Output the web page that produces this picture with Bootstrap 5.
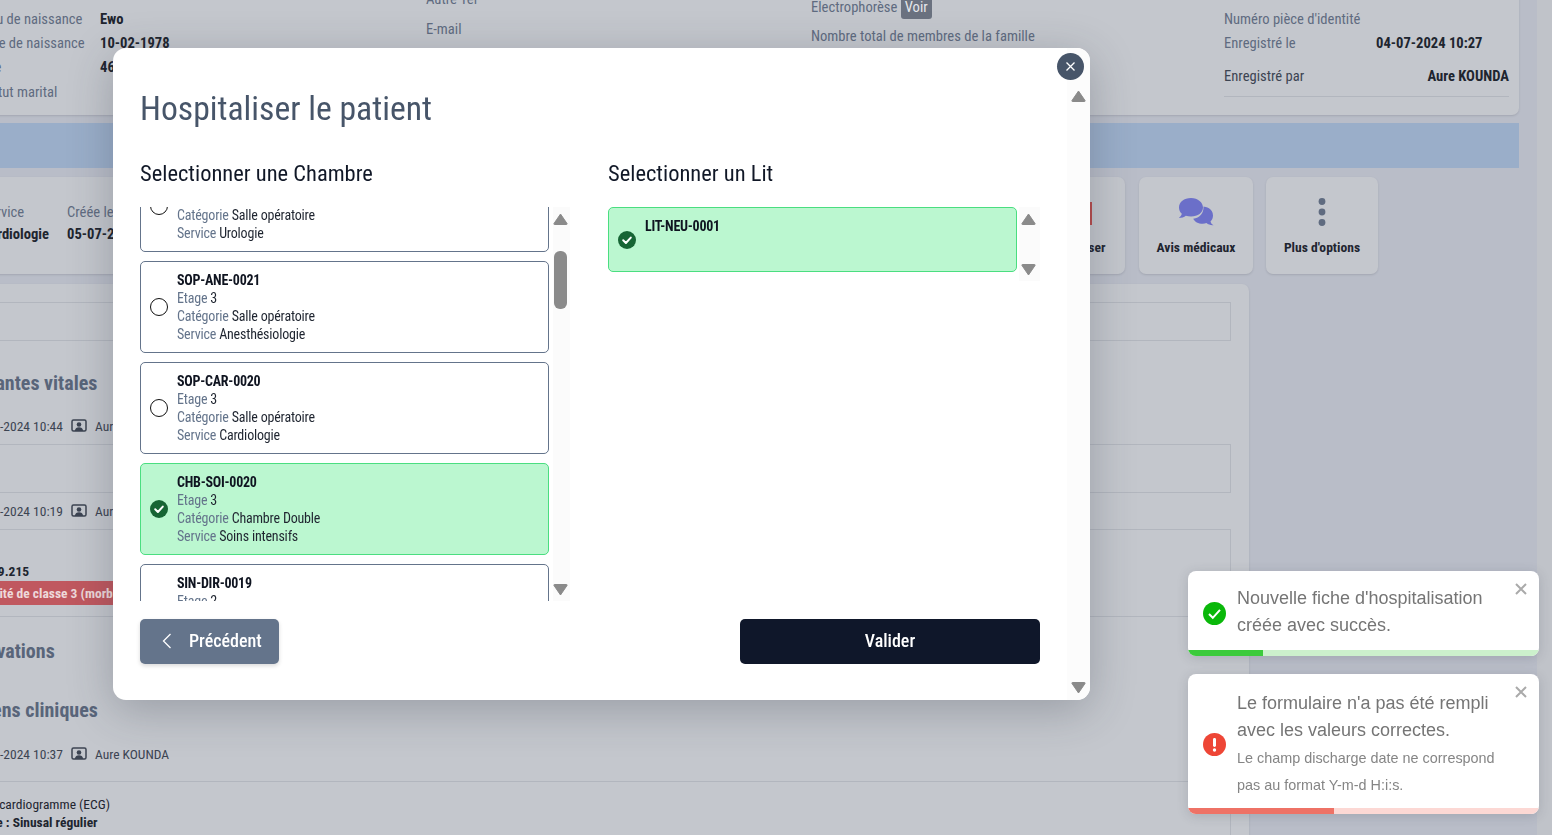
<!DOCTYPE html>
<html lang="fr"><head><meta charset="utf-8"><title>Hospitaliser</title>
<link href="https://cdn.jsdelivr.net/npm/bootstrap@5.3.0/dist/css/bootstrap.min.css" rel="stylesheet">
<style>
html,body{height:100%;overflow:hidden}
body{background:#b9bdc8;font-family:"Roboto Condensed","Liberation Sans Narrow",Roboto,sans-serif;font-stretch:condensed;font-size:14.6px;color:#1f2530}
.shell{height:835px;overflow:hidden}
.pg{width:1579px;margin-left:-60px;margin-top:-18px;flex:none}
.strip{width:15px;flex:none;margin-left:18px;background:#c0c3c9}
.panel{background:#c4c7cd;border-radius:7px;box-shadow:0 1px 2px rgba(60,65,80,.18)}
.lbl{color:#5f6b80}.val{font-weight:700;color:#20252f}
.top-card{height:133px}
.c1{width:486px;padding:24.5px 0 0 39px}.c2{width:385px;padding-top:5px}.c3{width:413px;padding-top:13px}.c4{width:285px;padding-top:25px}
.tr{height:24.4px;line-height:24.4px;white-space:nowrap}
.c1 .lbl{display:inline-block;width:121px}
.c4 .lbl{display:inline-block;width:152px}
.voir{background:#6b7280;color:#e5e7eb;border-radius:3px;padding:1px 4px 3px;margin-left:0}
.c2 .gap1{margin-top:6px}.c3 .gap2{margin-top:5px}
.c4 .hr2{border-top:1px solid #b2b6be;margin-top:8px;width:285px}
.bluebar{height:45px;margin-top:8px;background:#9aaec9}
.svc{height:97px;margin-top:9px;gap:14px}
.svc-main{flex:0 0 1066px;padding:24px 0 0 42px;gap:18px;line-height:22px;height:97px}
.act{height:97px;text-align:center;font-weight:700;font-size:13.6px;padding-top:20px}
.act svg{display:block;margin:0 auto 10px}
.a1{width:105px;padding-top:24px}.a2{width:114px}.a3{width:112px;margin-left:-1px}
.a1 svg{margin-bottom:11px}
.main{height:600px;width:1309px;margin-top:10px;padding:18px 18px 0 0}
.bx{border:1px solid #b2b6be;border-left:0}
.b1{height:39px}
.sect{color:#59657a;font-weight:700;font-size:20px;line-height:26px;white-space:nowrap}
.dt{font-size:13.5px;color:#3c4452;gap:8px;line-height:18px;white-space:nowrap;padding-left:30px}
.redbar{background:#c0585f;color:#eed9da;font-weight:700;font-size:13.5px;width:300px;height:24px;line-height:24px;padding-left:32px;white-space:nowrap;overflow:hidden}
.sx{padding-left:9px}
.ecg{font-size:13.5px;padding-left:22px;padding-top:13px;line-height:18px;height:100px;border-bottom:0;margin-top:18px}
.hsp{position:fixed;left:113px;top:48px;width:977px;height:652px;background:#fff;border-radius:13px;box-shadow:0 10px 45px rgba(40,45,60,.28);overflow:hidden;font-size:14px;letter-spacing:-.19px}
.hsp-body{padding:0 27px;width:954px}
.hsp-title{font-size:33.7px;line-height:40px;color:#475569;margin:41px 0 0;font-weight:400;letter-spacing:0}
.sub{font-size:22.5px;line-height:30px;color:#111827;margin:0 0 19px;font-weight:400;letter-spacing:0}
.hsp-scroll{position:absolute;right:0;top:0;bottom:0;width:23px;background:#fcfcfc}
.arr{display:block;width:15px;height:12px;fill:#8a8a8a}
.hsp-scroll .up{position:absolute;top:42px;left:4px}
.hsp-scroll .dn{position:absolute;bottom:6px;left:4px}
.close-x{position:absolute;left:944px;top:5px;width:27px;height:27px;border-radius:50%;background:#475569;z-index:2;border:0;padding:0}
.lcol{width:430px;flex:none}.rcol{width:432px;margin-left:38px;flex:none}
.view{height:394px;overflow:hidden;width:409px}
.rolls{margin-top:-47px;gap:9px}
.rm{height:92px;flex:none;border:1px solid #64748b;border-radius:5px;padding:9px 9px;gap:9px;line-height:18px;background:#fff;color:#1f2530;white-space:nowrap}
.rm.on{background:#bbf7d0;border-color:#4ade80}
.rm .k{color:#64748b}.rm .nm{font-weight:700;color:#0f1420;letter-spacing:-.25px}
.radio-o{width:18px;height:18px;border:1.5px solid #111;border-radius:50%;flex:none}
.chk{width:18px;height:18px;flex:none;display:block}
.sbar{width:17px;margin-left:4px;height:394px;background:#fbfbfb;position:relative}
.sbar .up{position:absolute;top:6px;left:0}
.sbar .dn{position:absolute;bottom:5px;left:0}
.thumb{position:absolute;left:1px;top:44px;width:13px;height:58px;border-radius:6px;background:#8a8a8a}
.bar2{width:21px;height:74px;margin-left:2px;background:#fbfbfb;position:relative}
.bar2 .up{position:absolute;top:6px;left:2px}.bar2 .dn{position:absolute;bottom:5px;left:2px}
.bed{height:65px;width:409px}
.btn-prev,.btn-ok{height:45px;font-size:18px;font-weight:500;border-radius:5px;color:#fff;border:0;padding-bottom:8px;padding-top:6px;letter-spacing:0}
.btn-prev{background:#64748b;width:139px;box-shadow:0 2px 4px rgba(0,0,0,.15);gap:17px;padding-left:22px;padding-right:0}
.btn-ok{background:#0f172a;width:300px}
.foot{margin-top:18px;width:900px}
.tst{position:fixed;left:1188px;width:351px;background:#fff;border-radius:8px;box-shadow:0 2px 12px rgba(50,55,70,.18);font-family:"Liberation Sans",Arial,sans-serif;font-stretch:normal;color:#757575;overflow:hidden;font-size:18px;line-height:27px}
.t1{top:571px;height:85px}.t2{top:674px;height:140px}
.tst-in{padding:0 0 0 15px;gap:11px;height:100%}
.t1 .msg{margin-top:-3px}
.t2 .msg{margin-top:1px}
.tst-x{position:absolute;right:12px;top:12px;width:12px;height:12px;display:block;stroke:#aaa;stroke-width:2}
.tst-small{font-size:14.4px;line-height:27px;display:block;color:#858585;margin-top:1px}
.prog{position:absolute;left:0;right:0;bottom:0;height:6px}
.prog i{display:block;height:100%}
.gp{background:#ccf1cc}.gp i{background:#3ccb3c;width:75px}
.rp{background:#fcd8d4}.rp i{background:#ee7266;width:146px}
</style></head>
<body>
<svg width="0" height="0" class="position-absolute">
 <symbol id="up" viewBox="0 0 15 12"><path d="M7.5 1 14 10.5a.6.6 0 0 1-.5 1H1.5a.6.6 0 0 1-.5-1z" stroke="#8a8a8a" stroke-linejoin="round"/></symbol>
 <symbol id="dn" viewBox="0 0 15 12"><path d="M7.5 11 14 1.5a.6.6 0 0 0-.5-1H1.5a.6.6 0 0 0-.5 1z" stroke="#8a8a8a" stroke-linejoin="round"/></symbol>
 <symbol id="ok" viewBox="0 0 18 18"><circle cx="9" cy="9" r="9" fill="#166534"/><path d="M5.2 9.3 7.9 12l4.9-5.4" fill="none" stroke="#fff" stroke-width="2" stroke-linecap="round" stroke-linejoin="round"/></symbol>
 <symbol id="who" viewBox="0 0 16 14"><rect x="1" y="1" width="14" height="11" rx="1.5" fill="none" stroke="#3c4452" stroke-width="1.5"/><circle cx="8" cy="5.5" r="2.3" fill="#3c4452"/><path d="M3.8 12c.4-2.8 2-3.8 4.2-3.8s3.800 1 4.200 3.800z" fill="#3c4452"/></symbol>
</svg>
<div class="shell d-flex">
<div class="pg">
 <div class="panel top-card d-flex">
  <div class="c1">
   <div class="tr"><span class="lbl">Lieu de naissance</span><span class="val">Ewo</span></div>
   <div class="tr"><span class="lbl">Date de naissance</span><span class="val">10-02-1978</span></div>
   <div class="tr"><span class="lbl">Age</span><span class="val">46</span></div>
   <div class="tr"><span class="lbl">Statut marital</span></div>
  </div>
  <div class="c2">
   <div class="tr lbl">Autre Tel</div>
   <div class="tr lbl gap1">E-mail</div>
  </div>
  <div class="c3">
   <div class="tr lbl">Electrophorèse <span class="voir">Voir</span></div>
   <div class="tr lbl gap2">Nombre total de membres de la famille</div>
  </div>
  <div class="c4">
   <div class="tr"><span class="lbl">Numéro pièce d'identité</span></div>
   <div class="tr"><span class="lbl">Enregistré le</span><span class="val">04-07-2024 10:27</span></div>
   <div class="tr d-flex justify-content-between mt-2"><span style="color:#3c4452">Enregistré par</span><span class="val">Aure KOUNDA</span></div>
   <div class="hr2"></div>
  </div>
 </div>
 <div class="bluebar"></div>
 <div class="svc d-flex">
  <div class="panel svc-main d-flex">
   <div><div class="lbl">Service</div><div class="val">Cardiologie</div></div>
   <div><div class="lbl">Créée le</div><div class="val">05-07-2024</div></div>
  </div>
  <div class="panel act a1">
   <svg width="38" height="25" viewBox="0 0 38 25"><path d="M36.500 1v23" stroke="#b84b4b" stroke-width="3" fill="none"/></svg>
   Hospitaliser</div>
  <div class="panel act a2">
   <svg width="36" height="30" viewBox="0 0 36 30"><path d="M13 1C6 1 1 5 1 10.500c0 2.500 1 4.700 2.800 6.300C3.500 18.500 2.300 20 .8 21c2.900 0 5.300-1 7-2.300 1.600.5 3.400.8 5.200.8 7 0 12-4 12-9S20 1 13 1z" fill="#6b6fc9"/><path d="M25.500 9.500c2 .3 9.500 1.700 9.500 9 0 2.500-1 4.500-2.500 6 .3 1.500 1.500 3 3 3.800-3 .2-5.300-.8-7-2.200-1.200.4-2.500.6-3.800.6-4.500 0-8-2-9.500-5 6.500-.5 10.800-6 10.300-12.200z" fill="#6b6fc9"/></svg>
   Avis médicaux</div>
  <div class="panel act a3">
   <svg width="8" height="30" viewBox="0 0 8 30"><circle cx="4" cy="4.500" r="3.400" fill="#5f6b80"/><circle cx="4" cy="15" r="3.400" fill="#5f6b80"/><circle cx="4" cy="25.500" r="3.400" fill="#5f6b80"/></svg>
   Plus d'options</div>
 </div>
 <div class="panel main">
  <div class="bx b1"></div>
  <div class="sx sect" style="margin-top:29px">Constantes vitales</div>
  <div class="dt d-flex align-items-center" style="margin-top:21px"><span>04-07-2024 10:44</span><svg width="16" height="14"><use href="#who"/></svg><span>Aure KOUNDA</span></div>
  <div class="bx" style="height:49px;margin-top:9px"></div>
  <div class="dt d-flex align-items-center" style="margin-top:9px"><span>04-07-2024 10:19</span><svg width="16" height="14"><use href="#who"/></svg><span>Aure KOUNDA</span></div>
  <div class="bx" style="height:88px;margin-top:9px">
   <div class="val" style="margin-top:32px;line-height:18px;font-size:13.5px;padding-left:51px">29.215</div>
   <div class="redbar" style="margin-top:1px">Obésité de classe 3 (morbide)</div>
  </div>
  <div class="sx sect" style="margin-top:21px">Observations</div>
  <div class="sx sect" style="margin-top:33px">Examens cliniques</div>
  <div class="dt d-flex align-items-center" style="margin-top:22px"><span>05-07-2024 10:37</span><svg width="16" height="14"><use href="#who"/></svg><span>Aure KOUNDA</span></div>
  <div class="bx ecg">
   <div class="text-nowrap">Electrocardiogramme (ECG)</div>
   <div class="val text-nowrap">Rythme : Sinusal régulier</div>
   <div class="text-nowrap">Conduction auriculo-ventriculaire normale</div>
  </div>
 </div>
</div>
<div class="strip"></div>
</div>

<div class="hsp">
 <button class="close-x" aria-label="Fermer"><svg width="11" height="11" viewBox="0 0 11 11" class="d-block mx-auto"><path d="M1.500 1.500l8 8m0-8l-8 8" stroke="#fff" stroke-width="1.300"/></svg></button>
 <div class="hsp-scroll"><svg class="arr up"><use href="#up"/></svg><svg class="arr dn"><use href="#dn"/></svg></div>
 <div class="hsp-body">
  <h2 class="hsp-title">Hospitaliser le patient</h2>
  <div class="d-flex" style="margin-top:29px">
   <div class="lcol">
    <h3 class="sub">Selectionner une Chambre</h3>
    <div class="d-flex">
     <div class="view"><div class="rolls d-flex flex-column">
      <div class="rm d-flex align-items-center"><span class="radio-o"></span><div><div class="nm">SOP-URO-0022</div><div><span class="k">Etage</span> 3</div><div><span class="k">Catégorie</span> Salle opératoire</div><div><span class="k">Service</span> Urologie</div></div></div>
      <div class="rm d-flex align-items-center"><span class="radio-o"></span><div><div class="nm">SOP-ANE-0021</div><div><span class="k">Etage</span> 3</div><div><span class="k">Catégorie</span> Salle opératoire</div><div><span class="k">Service</span> Anesthésiologie</div></div></div>
      <div class="rm d-flex align-items-center"><span class="radio-o"></span><div><div class="nm">SOP-CAR-0020</div><div><span class="k">Etage</span> 3</div><div><span class="k">Catégorie</span> Salle opératoire</div><div><span class="k">Service</span> Cardiologie</div></div></div>
      <div class="rm on d-flex align-items-center"><svg class="chk"><use href="#ok"/></svg><div><div class="nm">CHB-SOI-0020</div><div><span class="k">Etage</span> 3</div><div><span class="k">Catégorie</span> Chambre Double</div><div><span class="k">Service</span> Soins intensifs</div></div></div>
      <div class="rm d-flex align-items-center"><span class="radio-o invisible"></span><div><div class="nm">SIN-DIR-0019</div><div><span class="k">Etage</span> 2</div><div><span class="k">Catégorie</span> Chambre</div><div><span class="k">Service</span> Direction</div></div></div>
     </div></div>
     <div class="sbar"><svg class="arr up"><use href="#up"/></svg><div class="thumb"></div><svg class="arr dn"><use href="#dn"/></svg></div>
    </div>
   </div>
   <div class="rcol">
    <h3 class="sub">Selectionner un Lit</h3>
    <div class="d-flex align-items-start">
     <div class="rm on bed d-flex align-items-center"><svg class="chk"><use href="#ok"/></svg><div class="nm align-self-start">LIT-NEU-0001</div></div>
     <div class="bar2"><svg class="arr up"><use href="#up"/></svg><svg class="arr dn"><use href="#dn"/></svg></div>
    </div>
   </div>
  </div>
  <div class="foot d-flex justify-content-between">
   <button class="btn btn-prev d-flex align-items-center"><svg width="10" height="16" viewBox="0 0 10 16"><path d="M8.500 1 1.500 8l7 7" fill="none" stroke="#fff" stroke-width="1.300"/></svg>Précédent</button>
   <button class="btn btn-ok">Valider</button>
  </div>
 </div>
</div>

<div class="tst t1">
 <div class="tst-in d-flex align-items-center">
  <svg width="23" height="23" viewBox="0 0 23 23" class="flex-none"><circle cx="11.500" cy="11.500" r="11.500" fill="#0ab80a"/><path d="M6 12l3.800 3.800L17 7.800" fill="none" stroke="#fff" stroke-width="2"/></svg>
  <div class="msg">Nouvelle fiche d'hospitalisation<br>créée avec succès.</div>
 </div>
 <svg class="tst-x" viewBox="0 0 12 12"><path d="M1 1l10 10M11 1 1 11"/></svg>
 <div class="prog gp"><i></i></div>
</div>
<div class="tst t2">
 <div class="tst-in d-flex align-items-center">
  <svg width="23" height="23" viewBox="0 0 23 23" class="flex-none"><circle cx="11.500" cy="11.500" r="11.500" fill="#ee4636"/><rect x="10" y="5" width="3" height="9" rx="1.400" fill="#fff"/><circle cx="11.500" cy="17" r="1.700" fill="#fff"/></svg>
  <div class="msg">Le formulaire n'a pas été rempli<br>avec les valeurs correctes.<span class="tst-small">Le champ discharge date ne correspond<br>pas au format Y-m-d H:i:s.</span></div>
 </div>
 <svg class="tst-x" viewBox="0 0 12 12"><path d="M1 1l10 10M11 1 1 11"/></svg>
 <div class="prog rp"><i></i></div>
</div>
</body></html>
